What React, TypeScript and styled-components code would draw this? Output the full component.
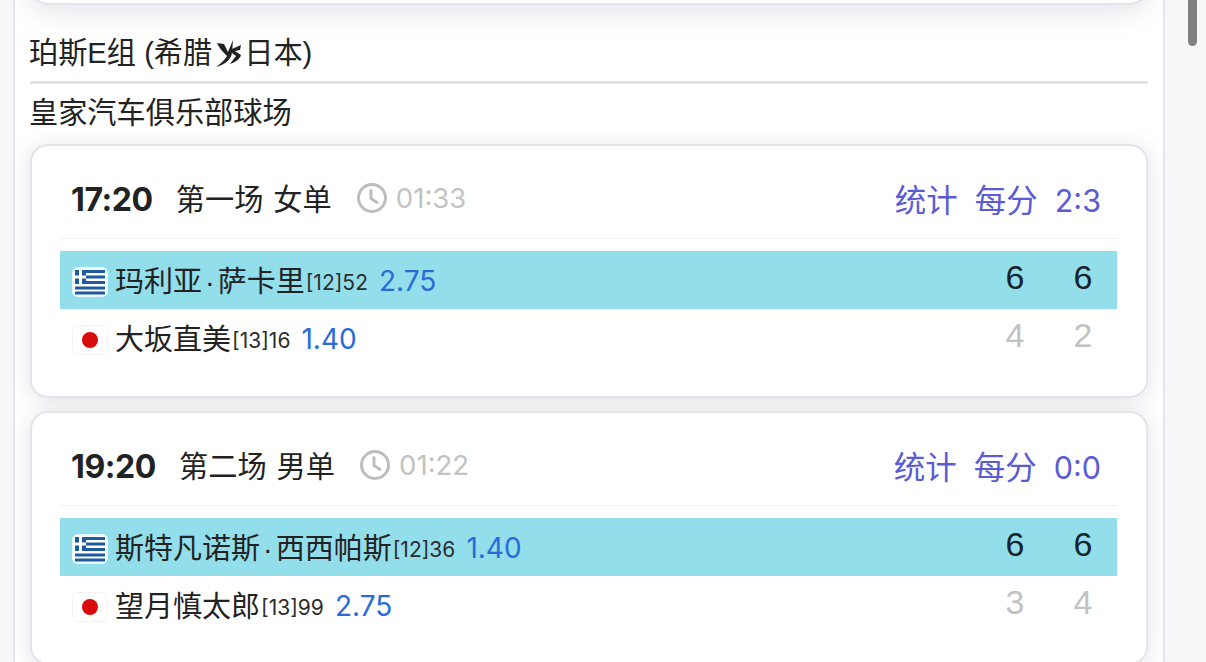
import React from 'react';
import styled, { createGlobalStyle } from 'styled-components';

const CJK = '"Noto Sans CJK SC", "Liberation Sans", sans-serif';
const LATIN = '"Liberation Sans", "Noto Sans CJK SC", sans-serif';
const DIGITS = 'Inter, "Liberation Sans", "Noto Sans CJK SC", sans-serif';

const GlobalStyle = createGlobalStyle`
  html, body {
    margin: 0;
    height: 100%;
    overflow: hidden;
    background: #f8f8fb;
  }
`;

const Page = styled.div`
  display: flex;
  height: 662px;
  overflow: hidden;
  padding-left: 13px;
  box-sizing: border-box;
  color: #222;
  font-family: ${CJK};
`;

const Panel = styled.main`
  width: 1152px;
  flex: none;
  box-sizing: border-box;
  background: #fff;
  border-left: 2px solid #e6e6ee;
  border-right: 2px solid #e6e6ee;
  padding: 0 15px;
`;

const Rail = styled.aside`
  flex: 1;
  display: flex;
  justify-content: flex-end;
  padding-right: 9px;
`;

const Thumb = styled.div`
  width: 9px;
  height: 46px;
  background: #808080;
  border-radius: 0 0 5px 5px;
`;

/* the previous card, scrolled up so only its bottom edge shows */
const PrevCard = styled.div`
  height: 205px;
  margin-top: -200px;
  box-sizing: border-box;
  background: #fff;
  border: 2px solid #e4e5ec;
  border-radius: 18px;
  box-shadow: 0 6px 28px rgba(40, 40, 70, 0.13);
`;

const GroupTitle = styled.h2`
  display: flex;
  align-items: center;
  height: 79px;
  margin: 0;
  box-sizing: border-box;
  padding-top: 20px;
  border-bottom: 3px solid #e3e3e7;
  font-family: ${LATIN};
  font-size: 29.2px;
  font-weight: 400;
  line-height: 40px;
  text-indent: -1px;
  white-space: pre;
`;

const VsMark = styled.svg`
  width: 27px;
  height: 27px;
  margin: 0 2px 0 4px;
  flex: none;
`;

const Venue = styled.div`
  height: 60px;
  font-size: 29.2px;
  line-height: 52px;
  text-indent: -1px;
`;

const Card = styled.section`
  height: 254px;
  box-sizing: border-box;
  margin-bottom: 13px;
  padding: 0 29px 0 28px;
  background: #fff;
  border: 2px solid #e4e5ec;
  border-radius: 18px;
  box-shadow: 0 2px 22px rgba(40, 40, 70, 0.13);
`;

const CardHead = styled.header`
  display: flex;
  align-items: center;
  height: 93px;
  box-sizing: border-box;
  padding: 14px 16px 0 11px;
  border-bottom: 1px solid #f0f0f2;
`;

const KickOff = styled.span`
  margin-right: 23px;
  flex: none;
  font-family: ${DIGITS};
  font-size: 32px;
  font-weight: 700;
  letter-spacing: -0.4px;
  color: #222;
`;

const MatchName = styled.span`
  margin-bottom: 4px;
  font-size: 29.2px;
  letter-spacing: 0.1px;
  word-spacing: 3px;
  white-space: pre;
`;

const Duration = styled.span`
  display: flex;
  align-items: center;
  gap: 8px;
  margin: 0 0 2px 24px;
  font-family: ${DIGITS};
  font-size: 27.5px;
  color: #c2c2c2;
`;

const Links = styled.nav`
  display: flex;
  align-items: baseline;
  gap: 17px;
  margin: 0 0 3px auto;
  font-size: 31.5px;
  color: #5b5bd3;
`;

const Score = styled.span`
  font-family: ${DIGITS};
  font-size: 30.5px;
`;

const Rows = styled.div`
  margin-top: 12px;
`;

const Row = styled.div<{ $won: boolean }>`
  display: flex;
  align-items: center;
  height: 58px;
  padding-left: 12px;
  background: ${(p) => (p.$won ? '#92deea' : 'transparent')};
`;

const FlagFrame = styled.svg`
  width: 36px;
  height: 30px;
  flex: none;
  margin: 4px 7px 0 0;
`;

const Player = styled.span`
  margin-bottom: 3px;
  font-size: 29px;
  white-space: nowrap;
  color: #222;
`;

const NameDot = styled.span`
  margin: 0 3px;
  font-family: ${LATIN};
`;

const Rank = styled.span`
  margin: 4px 11px 0 1px;
  font-family: ${DIGITS};
  font-size: 21px;
  color: #2c2c2c;
`;

const Odds = styled.span`
  margin-top: 2px;
  font-family: ${DIGITS};
  font-size: 28px;
  color: #2a6bd8;
`;

const Sets = styled.div`
  display: flex;
  margin-left: auto;
`;

const SetScore = styled.span<{ $won: boolean }>`
  width: 68px;
  margin-bottom: 6px;
  text-align: center;
  font-family: ${LATIN};
  font-size: 34px;
  color: ${(p) => (p.$won ? '#16242c' : '#c2c2c2')};
`;

const ClockIcon = () => (
  <svg width="32" height="32" viewBox="0 0 32 32" fill="none" stroke="#bdbdbd" strokeWidth="3" strokeLinecap="round" strokeLinejoin="round">
    <circle cx="16" cy="16" r="13.5" />
    <path d="M15 8.5V16.5L21 20.5" />
  </svg>
);

const GreeceFlag = () => (
  <FlagFrame viewBox="0 0 36 30">
    <rect x="1" y="1" width="34" height="28" rx="5" fill="#fff" stroke="#eaf8fa" strokeWidth="2" />
    <g fill="#1f5a9e">
      <rect x="3" y="3" width="30" height="3" />
      <rect x="14" y="8.5" width="19" height="3" />
      <rect x="14" y="14" width="19" height="3" />
      <rect x="3" y="19.5" width="30" height="3" />
      <rect x="3" y="24.5" width="30" height="3" />
      <rect x="3" y="3" width="11" height="14" />
    </g>
    <rect x="7" y="3" width="3" height="14" fill="#fff" />
    <rect x="3" y="8.5" width="11" height="3" fill="#fff" />
  </FlagFrame>
);

const JapanFlag = () => (
  <FlagFrame viewBox="0 0 36 30">
    <rect x="0.5" y="0.5" width="35" height="29" rx="5" fill="#fff" stroke="#f2f2f4" />
    <circle cx="18" cy="15" r="8" fill="#d90a0a" />
  </FlagFrame>
);

const Vs = () => (
  <VsMark viewBox="0 0 27 27" aria-label="VS">
    <path
      fill="#222"
      d="M1 3 L8 4 L12 12 L17 0 L16 13 C15 20 8 25 0 27 C5 23 9 20 11 16 C7 12 3 8 1 3 Z M16 9 L25 5 L24 10 L19 11 L25 15 C24 19 20 22 14 24 C16 21 18 19 20 16 L16 13 Z"
    />
  </VsMark>
);

type Side = {
  flag: 'gr' | 'jp';
  name: string;
  rank: string;
  odds: string;
  sets: string[];
  won: boolean;
};

type Match = {
  time: string;
  name: string;
  duration: string;
  score: string;
  sides: Side[];
};

const matches: Match[] = [
  {
    time: '17:20',
    name: '第一场 女单',
    duration: '01:33',
    score: '2:3',
    sides: [
      { flag: 'gr', name: '玛利亚·萨卡里', rank: '[12]52', odds: '2.75', sets: ['6', '6'], won: true },
      { flag: 'jp', name: '大坂直美', rank: '[13]16', odds: '1.40', sets: ['4', '2'], won: false },
    ],
  },
  {
    time: '19:20',
    name: '第二场 男单',
    duration: '01:22',
    score: '0:0',
    sides: [
      { flag: 'gr', name: '斯特凡诺斯·西西帕斯', rank: '[12]36', odds: '1.40', sets: ['6', '6'], won: true },
      { flag: 'jp', name: '望月慎太郎', rank: '[13]99', odds: '2.75', sets: ['3', '4'], won: false },
    ],
  },
];

const PlayerName = ({ name }: { name: string }) => {
  const [first, last] = name.split('·');
  return (
    <Player>
      {first}
      {last && <NameDot>·</NameDot>}
      {last}
    </Player>
  );
};

const App = () => (
  <Page>
    <GlobalStyle />
    <Panel>
      <PrevCard />
      <GroupTitle>
        珀斯E组 (希腊
        <Vs />
        日本)
      </GroupTitle>
      <Venue>皇家汽车俱乐部球场</Venue>
      {matches.map((match) => (
        <Card key={match.time}>
          <CardHead>
            <KickOff>{match.time}</KickOff>
            <MatchName>{match.name}</MatchName>
            <Duration>
              <ClockIcon />
              {match.duration}
            </Duration>
            <Links>
              <span>统计</span>
              <span>每分</span>
              <Score>{match.score}</Score>
            </Links>
          </CardHead>
          <Rows>
            {match.sides.map((side) => (
              <Row key={side.name} $won={side.won}>
                {side.flag === 'gr' ? <GreeceFlag /> : <JapanFlag />}
                <PlayerName name={side.name} />
                <Rank>{side.rank}</Rank>
                <Odds>{side.odds}</Odds>
                <Sets>
                  {side.sets.map((set, i) => (
                    <SetScore key={i} $won={side.won}>
                      {set}
                    </SetScore>
                  ))}
                </Sets>
              </Row>
            ))}
          </Rows>
        </Card>
      ))}
    </Panel>
    <Rail>
      <Thumb />
    </Rail>
  </Page>
);

export default App;
